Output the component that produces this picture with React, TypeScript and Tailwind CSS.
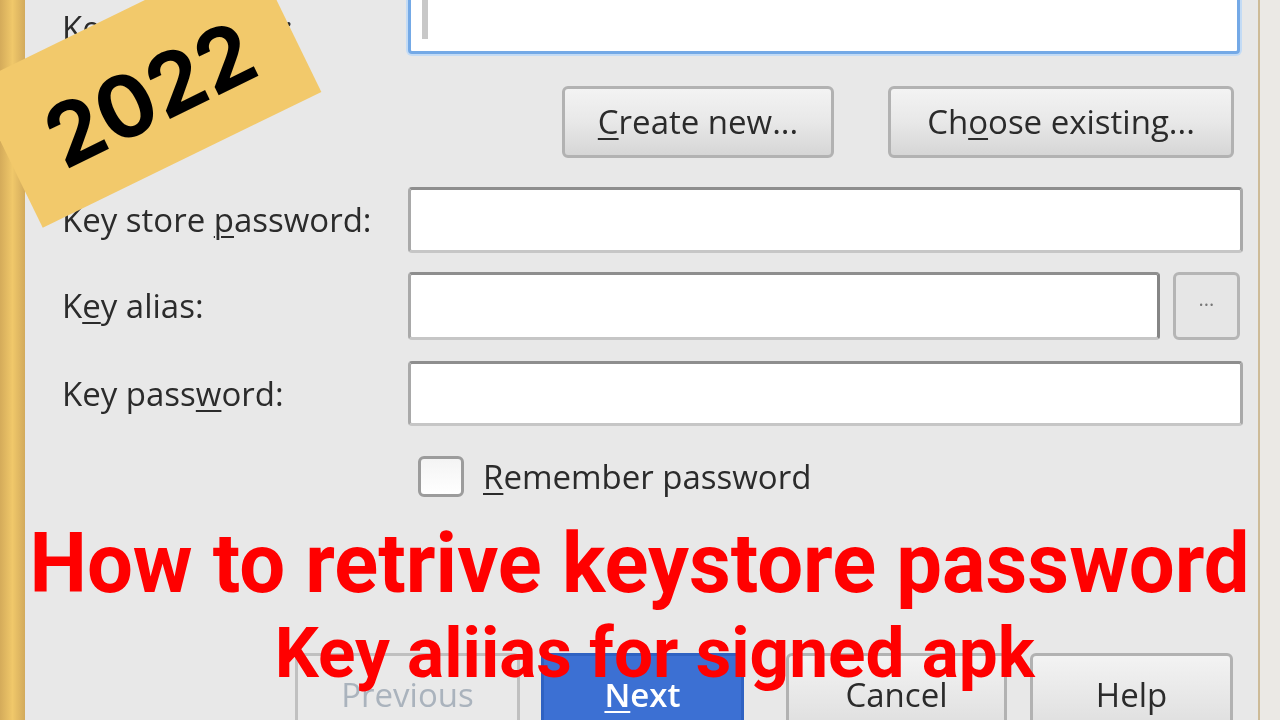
import React from "react";

const ui = { fontFamily: '"Open Sans", "Noto Sans", sans-serif' };

function Field({ className = "" }: { className?: string }) {
  return (
    <div
      className={`bg-white border-[3px] border-[#a9a9a9] border-t-[#8e8e8e] border-b-[#c6c6c6] rounded-[4px] ${className}`}
    />
  );
}

function Btn({
  children,
  className = "",
}: {
  children: React.ReactNode;
  className?: string;
}) {
  return (
    <div
      className={`flex items-center justify-center rounded-[6px] border-[3px] border-[#b2b2b2] bg-gradient-to-b from-[#f3f3f3] via-[#e8e8e8] to-[#d6d6d6] text-[33px] text-[#2b2b2b] ${className}`}
    >
      {children}
    </div>
  );
}

export default function App() {
  return (
    <div className="relative w-[1280px] h-[720px] overflow-hidden flex bg-[#e8e8e8]">
      {/* left gold strip */}
      <div className="w-[25px] h-full bg-gradient-to-r from-[#d4ab5a] via-[#f0c86a] to-[#d2aa5c]" />

      {/* dialog body */}
      <div
        className="flex-1 flex flex-col pl-[37px] pr-[15px] blur-[0.6px]"
        style={ui}
      >
        {/* Key store path */}
        <div className="mt-[-12px] h-[66px] flex items-center shrink-0">
          <div className="w-[346px] text-[33px] text-[#2b2b2b] pt-[14px]">
            Key store path:
          </div>
          <div className="flex-1 mr-[3px] h-full bg-white border-[3px] border-[#74a9e6] rounded-[4px] shadow-[0_0_0_2px_#c3dbf5] flex">
            <div className="ml-[11px] w-[6px] h-[calc(100%-12px)] bg-[#c8c8c8]" />
          </div>
        </div>

        {/* Create / Choose buttons */}
        <div className="mt-[32px] h-[72px] flex justify-end gap-[54px] pr-[9px] shrink-0">
          <Btn className="w-[272px] h-full">
            <span>
              <span className="underline decoration-2 underline-offset-4">C</span>reate new...
            </span>
          </Btn>
          <Btn className="w-[346px] h-full">
            <span>
              Ch<span className="underline decoration-2 underline-offset-4">o</span>ose existing...
            </span>
          </Btn>
        </div>

        {/* Key store password */}
        <div className="mt-[29px] h-[66px] flex items-center shrink-0">
          <div className="w-[346px] text-[33px] text-[#2b2b2b]">
            Key store <span className="underline decoration-2 underline-offset-4">p</span>assword:
          </div>
          <Field className="flex-1 h-full" />
        </div>

        {/* Key alias */}
        <div className="mt-[19px] h-[68px] flex items-center shrink-0">
          <div className="w-[346px] text-[33px] text-[#2b2b2b]">
            K<span className="underline decoration-2 underline-offset-4">e</span>y alias:
          </div>
          <Field className="w-[752px] h-full border-r-[#858585]" />
          <div className="ml-[13px] w-[67px] h-full rounded-[6px] border-[3px] border-[#b5b5b5] bg-[#e6e6e6] flex items-center justify-center text-[20px] text-[#777] leading-none pb-[2px]">
            ···
          </div>
        </div>

        {/* Key password */}
        <div className="mt-[21px] h-[65px] flex items-center shrink-0">
          <div className="w-[346px] text-[33px] text-[#2b2b2b]">
            Key pass<span className="underline decoration-2 underline-offset-4">w</span>ord:
          </div>
          <Field className="flex-1 h-full" />
        </div>

        {/* Remember password */}
        <div className="mt-[30px] h-[41px] flex items-center shrink-0 pl-[356px]">
          <div className="w-[46px] h-[41px] rounded-[6px] border-[3px] border-[#9c9c9c] bg-gradient-to-b from-[#f4f4f4] to-white" />
          <div className="ml-[19px] text-[33px] text-[#2b2b2b]">
            <span className="underline decoration-2 underline-offset-4">R</span>emember password
          </div>
        </div>

        {/* bottom buttons */}
        <div className="mt-[156px] h-[80px] flex shrink-0 pl-[233px]">
          <div className="w-[225px] h-full rounded-[6px] border-[3px] border-[#c0c0c0] bg-[#e9e9e9] flex justify-center pt-[14px] text-[33px] text-[#aab3bd]">
            Previous
          </div>
          <div className="ml-[21px] w-[203px] h-full rounded-[4px] border-[3px] border-[#2f62c2] bg-[#3c70d3] flex justify-center pt-[14px] text-[33px] font-semibold text-white">
            <span>
              <span className="underline decoration-2 underline-offset-4">N</span>ext
            </span>
          </div>
          <div className="ml-[42px] w-[221px] h-full rounded-[6px] border-[3px] border-[#b2b2b2] bg-gradient-to-b from-[#f3f3f3] to-[#dedede] flex justify-center pt-[14px] text-[33px] text-[#2b2b2b]">
            Cancel
          </div>
          <div className="ml-[23px] w-[203px] h-full rounded-[6px] border-[3px] border-[#b2b2b2] bg-gradient-to-b from-[#f3f3f3] to-[#dedede] flex justify-center pt-[14px] text-[33px] text-[#2b2b2b]">
            Help
          </div>
        </div>
      </div>

      {/* right edge */}
      <div className="w-[22px] h-full border-l-[2px] border-[#cdbb98] bg-[#ebe9e5]" />

      {/* 2022 tag */}
      <div
        className="absolute left-[-8px] top-[8px] w-[310px] h-[160px] bg-[#f2c96b] rotate-[-26deg] flex justify-center items-center pt-[14px]"
        style={{ fontFamily: 'Inter, "Open Sans", sans-serif' }}
      >
        <span className="text-[86px] font-bold text-black leading-none">
          2022
        </span>
      </div>

      {/* red caption */}
      <div
        className="absolute inset-x-0 top-[522px] flex flex-col items-center text-[#ff0000] font-bold leading-none"
        style={{ fontFamily: 'Roboto, "Liberation Sans", sans-serif' }}
      >
        <div className="text-[83px] whitespace-nowrap scale-x-[0.98]">
          How to retrive keystore password
        </div>
        <div className="mt-[13px] ml-[30px] text-[70px] whitespace-nowrap scale-x-[0.99]">
          Key aliias for signed apk
        </div>
      </div>
    </div>
  );
}
